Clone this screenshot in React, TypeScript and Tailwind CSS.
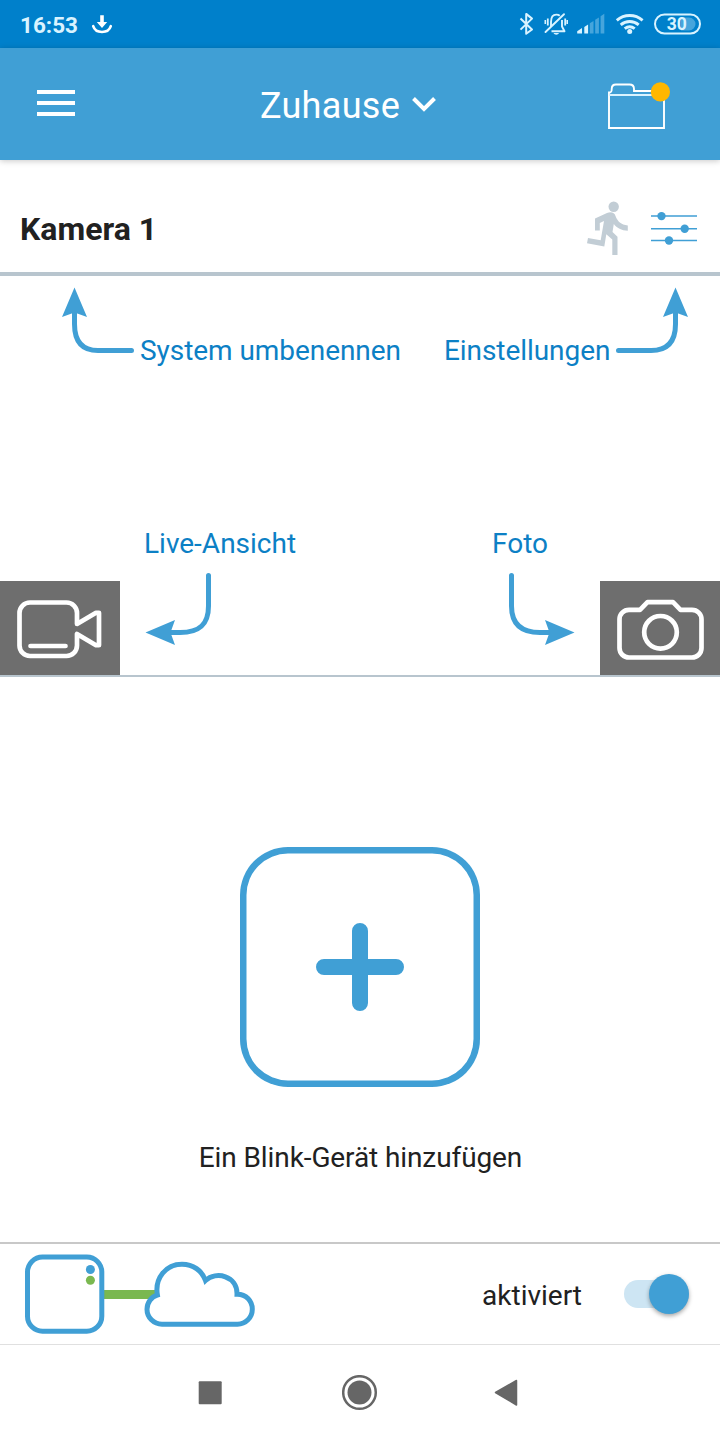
import type { ReactNode } from "react";

const blue = "#409fd5";
const pale = "#d9f3ff";

const StatusBar = () => (
  <div className="flex h-12 items-center bg-[#0080cb] pl-5 pr-[19px] text-[#d9f3ff]">
    <span className="pt-0.5 text-[22.500px] font-bold leading-none">16:53</span>
    <svg className="ml-[13px]" width="22" height="20" viewBox="91 14 22 20" fill="none">
      <path d="M93.200 26.200C94.500 30.500 98 32 102 32s7.500-1.500 8.800-5.800" stroke="#fff" strokeWidth="2.600" strokeLinecap="round" />
      <path d="M100.200 15.200h3.600V22h3.400L102 28l-5.200-6h3.400z" fill="#fff" />
    </svg>

    <div className="ml-auto flex items-center">
      <svg width="182" height="24" viewBox="519 12 182 24" fill="none">
        {/* bluetooth */}
        <path d="M520.500 18.500l11.500 11-5.800 4.300V13.900L532 18.600l-11.500 11" stroke={pale} strokeWidth="2" strokeLinejoin="round" />
        {/* muted bell */}
        <path d="M551 27V22c0-5 2.300-7.400 5.300-7.400 1.500 0 2.600.4 3.500 1.200M562 20v6.500l2.500 4.800h-13" stroke={pale} strokeWidth="1.900" strokeLinejoin="round" />
        <path d="M545.500 32l18.500-17.800" stroke={pale} strokeWidth="1.900" strokeLinecap="round" />
        <path d="M553.500 33h5.500c-1 2.300-4.500 2.300-5.500 0z" fill={pale} />
        <path d="M547.800 18.500v7M565.200 18.500v7" stroke={pale} strokeWidth="1.800" />
        <path d="M545.300 20v4M567.200 20v4" stroke={pale} strokeWidth="1.600" />
        {/* mobile signal */}
        <path d="M577.200 33.500v-2.200l4.800-3.300v5.500zM584.300 33.500v-6.600l3.800-2.300v8.900z" fill={pale} />
        <path d="M589.800 33.500V23.200l3.700-2.200v12.500zM595.200 33.500V19.700l3.700-2.300v16.100zM600.600 33.500V16.300l3.700-2.500v19.700z" fill="#46a5dc" />
        {/* wifi */}
        <path d="M616.800 20.300c7.500-6.400 18.300-6.400 25.800 0M620.700 24.800c5.300-4.400 12.700-4.400 18 0M624.700 28.700c3-2.400 7-2.400 10 0" stroke={pale} strokeWidth="2.900" />
        <circle cx="629.700" cy="31.600" r="2.500" fill={pale} />
        {/* battery */}
        <path d="M681 17.500h8a6.500 6.500 0 0 1 0 13h-8z" fill="#46a5dc" />
        <rect x="655" y="14.500" width="45" height="19" rx="9.500" stroke={pale} strokeWidth="2" />
        <text x="676.700" y="30" textAnchor="middle" fill={pale} fontSize="17.500" fontWeight="700">
          30
        </text>
      </svg>
    </div>
  </div>
);

const Header = () => (
  <header className="relative flex h-28 items-center justify-between bg-[#409fd5] pl-[37px] pr-[50px] text-white shadow-[0_1px_6px_rgba(0,0,0,0.22)]">
    <button className="mb-0.5 flex w-[38px] flex-col gap-[7px]" aria-label="Menü">
      <span className="h-1 bg-white" />
      <span className="h-1 bg-white" />
      <span className="h-1 bg-white" />
    </button>
    <button className="flex items-center gap-3 pl-[13px] pt-1 text-4xl tracking-[0.3px]">
      Zuhause
      <svg className="mb-1" width="24" height="16" viewBox="412 96 24 16" fill="none">
        <path d="M413.500 98.500l10.500 10.500 10.500-10.500" stroke="#fff" strokeWidth="4" />
      </svg>
    </button>
    <svg className="mt-1" width="62" height="50" viewBox="608 81 62 50" fill="none">
      <path d="M609 128V92.500c2.500 0 2.700-1 2.700-3.500 0-3 1.500-4.500 4.300-4.500h13.500c3 0 4.500 1.500 4.500 4.500v2h30v37z" stroke="#fff" strokeWidth="1.900" />
      <path d="M609 95h55" stroke="#d9f3ff" strokeWidth="2" />
      <circle cx="660.400" cy="91.900" r="9.600" fill="#ffb700" />
    </svg>
  </header>
);

type ArrowProps = { viewBox: string; line: string; head: string; width: number; height: number; className?: string };

const Arrow = ({ viewBox, line, head, width, height, className }: ArrowProps) => (
  <svg className={className} width={width} height={height} viewBox={viewBox} fill="none">
    <path d={line} stroke={blue} strokeWidth="5" strokeLinecap="round" />
    <path d={head} fill={blue} />
  </svg>
);

const CameraButton = ({ children }: { children: ReactNode }) => (
  <div className="h-[94px] w-[120px] bg-[#6e6e6e]">
    <svg width="120" height="94" viewBox="0 0 120 94" fill="none" stroke="#fff" strokeWidth="4.700" strokeLinejoin="round" strokeLinecap="round">
      {children}
    </svg>
  </div>
);

const CameraCard = () => (
  <section>
    <div className="flex h-[116px] items-center justify-between border-b-4 border-[#b8c5ce] pl-5 pr-[23px] pt-[26px]">
      <h2 className="text-[32px] font-bold leading-none text-[#212121]">Kamera 1</h2>
      <div className="flex items-center gap-[22px]">
        <svg width="42" height="56" viewBox="587 201 42 56" fill="#c2cdd5">
          <circle cx="613.700" cy="206.800" r="5.200" />
          <path d="M595 218.500l12-5.500c4-1.400 7.500-.5 8.500 3 2 5.300 5.500 8.800 12.300 9.500v5.300c-6.300-.3-11-2.800-14-6.800l-1.300 8 5 4.700V255h-5.200v-15.500l-6-5.300-2 12.300-17.300-3.300 1-5.200 12.700 2.300 3.300-19.300-4.200 2v7.500H595z" />
        </svg>
        <svg width="46" height="36" viewBox="651 211 46 36" fill={blue}>
          <path d="M651 215.200h46v1.600h-46zM651 227.900h46v1.600h-46zM651 239.700h46v1.600h-46z" />
          <circle cx="661.500" cy="216.100" r="4.200" />
          <circle cx="684.700" cy="228.700" r="4.200" />
          <circle cx="669" cy="240.500" r="4.200" />
        </svg>
      </div>
    </div>

    <div className="flex h-[401px] flex-col justify-between border-b-2 border-[#b8c5ce] text-[28px] leading-8 text-[#0c80c5]">
      <div className="flex items-end pl-[60px] pt-2.5 tracking-[-0.06px]">
        <Arrow
          className="mb-3"
          width={76}
          height={70}
          viewBox="60 286 76 70"
          line="M131.500 350.500H98C82 350.500 74.500 341 74.500 324V312"
          head="M74.500 287.500l12.500 29.500-12.500-4.500-12.500 4.500z"
        />
        <span className="mb-px ml-1 whitespace-nowrap">System umbenennen</span>
        <span className="mb-px ml-[43px]">Einstellungen</span>
        <Arrow
          className="mb-3 ml-1"
          width={76}
          height={70}
          viewBox="614 286 76 70"
          line="M618.500 350.500H651C668 350.500 675.500 341 675.500 324V312"
          head="M675.500 287.500l12.500 29.500-12.500-4.500-12.500 4.500z"
        />
      </div>

      <div className="flex items-end justify-between">
        <CameraButton>
          <path d="M30 21.500H66.500a10.500 10.500 0 0 1 10.500 10.500V43L96 31.800H99V64.200H96L77 53V64.500a10.500 10.500 0 0 1-10.500 10.500H30a10.500 10.500 0 0 1-10.500-10.500V32a10.500 10.500 0 0 1 10.500-10.500z" />
          <path d="M30.500 65H65.500" />
        </CameraButton>
        <div className="ml-6 mr-auto flex flex-col">
          <span>Live-Ansicht</span>
          <Arrow
            className="mb-[25px] mt-[11px]"
            width={72}
            height={79}
            viewBox="144 571 72 79"
            line="M208.500 575.500V606C208.500 624 200 632.500 180 632.500H170"
            head="M145.500 632.500l29.500-12.500-4.500 12.500 4.500 12.500z"
          />
        </div>
        <div className="mr-[23px] flex flex-col">
          <span>Foto</span>
          <Arrow
            className="mb-[25px] mt-[11px]"
            width={85}
            height={79}
            viewBox="492 571 85 79"
            line="M511.500 575.500V606C511.500 624 521 632.500 540 632.500H550"
            head="M574.500 632.500l-29.500-12.500 4.500 12.500-4.500 12.500z"
          />
        </div>
        <CameraButton>
          <path d="M29 28.800H40L47.500 21.200H73L80.500 28.800H92a9.500 9.500 0 0 1 9.500 9.500V67a9.500 9.500 0 0 1-9.500 9.500H29a9.500 9.500 0 0 1-9.500-9.500V38.300a9.500 9.500 0 0 1 9.500-9.500z" />
          <circle cx="60.500" cy="51.300" r="16.300" />
        </CameraButton>
      </div>
    </div>
  </section>
);

const AddDevice = () => (
  <section className="flex h-[565px] flex-col items-center pt-[170px]">
    <button className="flex size-60 items-center justify-center rounded-[48px] shadow-[inset_0_0_0_6.500px_#409fd5]" aria-label="Hinzufügen">
      <svg width="88" height="88" viewBox="0 0 88 88" stroke={blue} strokeWidth="16" strokeLinecap="round">
        <path d="M8 44H80M44 8V80" />
      </svg>
    </button>
    <p className="mt-[55px] pl-px text-[28px] leading-8 tracking-[-0.1px] text-[#212121]">Ein Blink-Gerät hinzufügen</p>
  </section>
);

const SystemStatus = () => (
  <footer className="flex h-[103px] items-center border-b border-t-2 border-b-[#e0e0e0] border-t-[#c8c8c8] pl-6 pr-[31px]">
    <svg width="232" height="80" viewBox="24 1254 232 80" fill="none">
      <path d="M103 1294.500H157" stroke="#7ab850" strokeWidth="9" />
      <rect x="27.500" y="1257" width="74.300" height="74.200" rx="15" stroke={blue} strokeWidth="5" />
      <circle cx="90.400" cy="1269.500" r="4.500" fill={blue} />
      <circle cx="90.400" cy="1280.300" r="4.500" fill="#7ab850" />
      <path
        d="M162 1324.200A15 15 0 0 1 147 1309.200C147 1302.500 151.500 1296.500 157.400 1295C154.500 1278 166 1264.200 182 1264.200C193 1264.200 202 1270.500 205.500 1280.500C216 1270.500 237.500 1276 237 1294.200C246 1294 252.300 1301 252.300 1309.200A15 15 0 0 1 237.500 1324.200z"
        fill="#fff"
        stroke={blue}
        strokeWidth="5"
      />
    </svg>
    <span className="ml-auto pt-1 text-[28px] leading-8 text-[#212121]">aktiviert</span>
    <div className="ml-[42px] flex h-7 w-[65px] items-center justify-end rounded-full bg-[#cde5f3]">
      <div className="size-10 rounded-full bg-[#409fd5] shadow-[0_2px_4px_rgba(0,0,0,0.35)]" />
    </div>
  </footer>
);

const NavigationBar = () => (
  <nav className="flex h-[95px] items-center justify-between pl-[198px] pr-[202px]">
    <svg width="24" height="24" viewBox="0 0 24 24" fill="#666">
      <rect x="0.700" y="0.200" width="23" height="23" rx="1" />
    </svg>
    <svg className="ml-[3px]" width="36" height="36" viewBox="0.5 0.5 36 36" fill="#666">
      <circle cx="18" cy="18" r="16.300" fill="none" stroke="#666" strokeWidth="2.500" />
      <circle cx="18" cy="18" r="12" />
    </svg>
    <svg width="24" height="28" viewBox="494 1379 24 28" fill="#666" stroke="#666" strokeWidth="1.500" strokeLinejoin="round">
      <path d="M495.500 1392.500L516.500 1380.500V1405z" />
    </svg>
  </nav>
);

export default function App() {
  return (
    <div className="h-[1440px] w-[720px] overflow-hidden bg-white font-['Roboto',sans-serif]">
      <StatusBar />
      <Header />
      <CameraCard />
      <AddDevice />
      <SystemStatus />
      <NavigationBar />
    </div>
  );
}
